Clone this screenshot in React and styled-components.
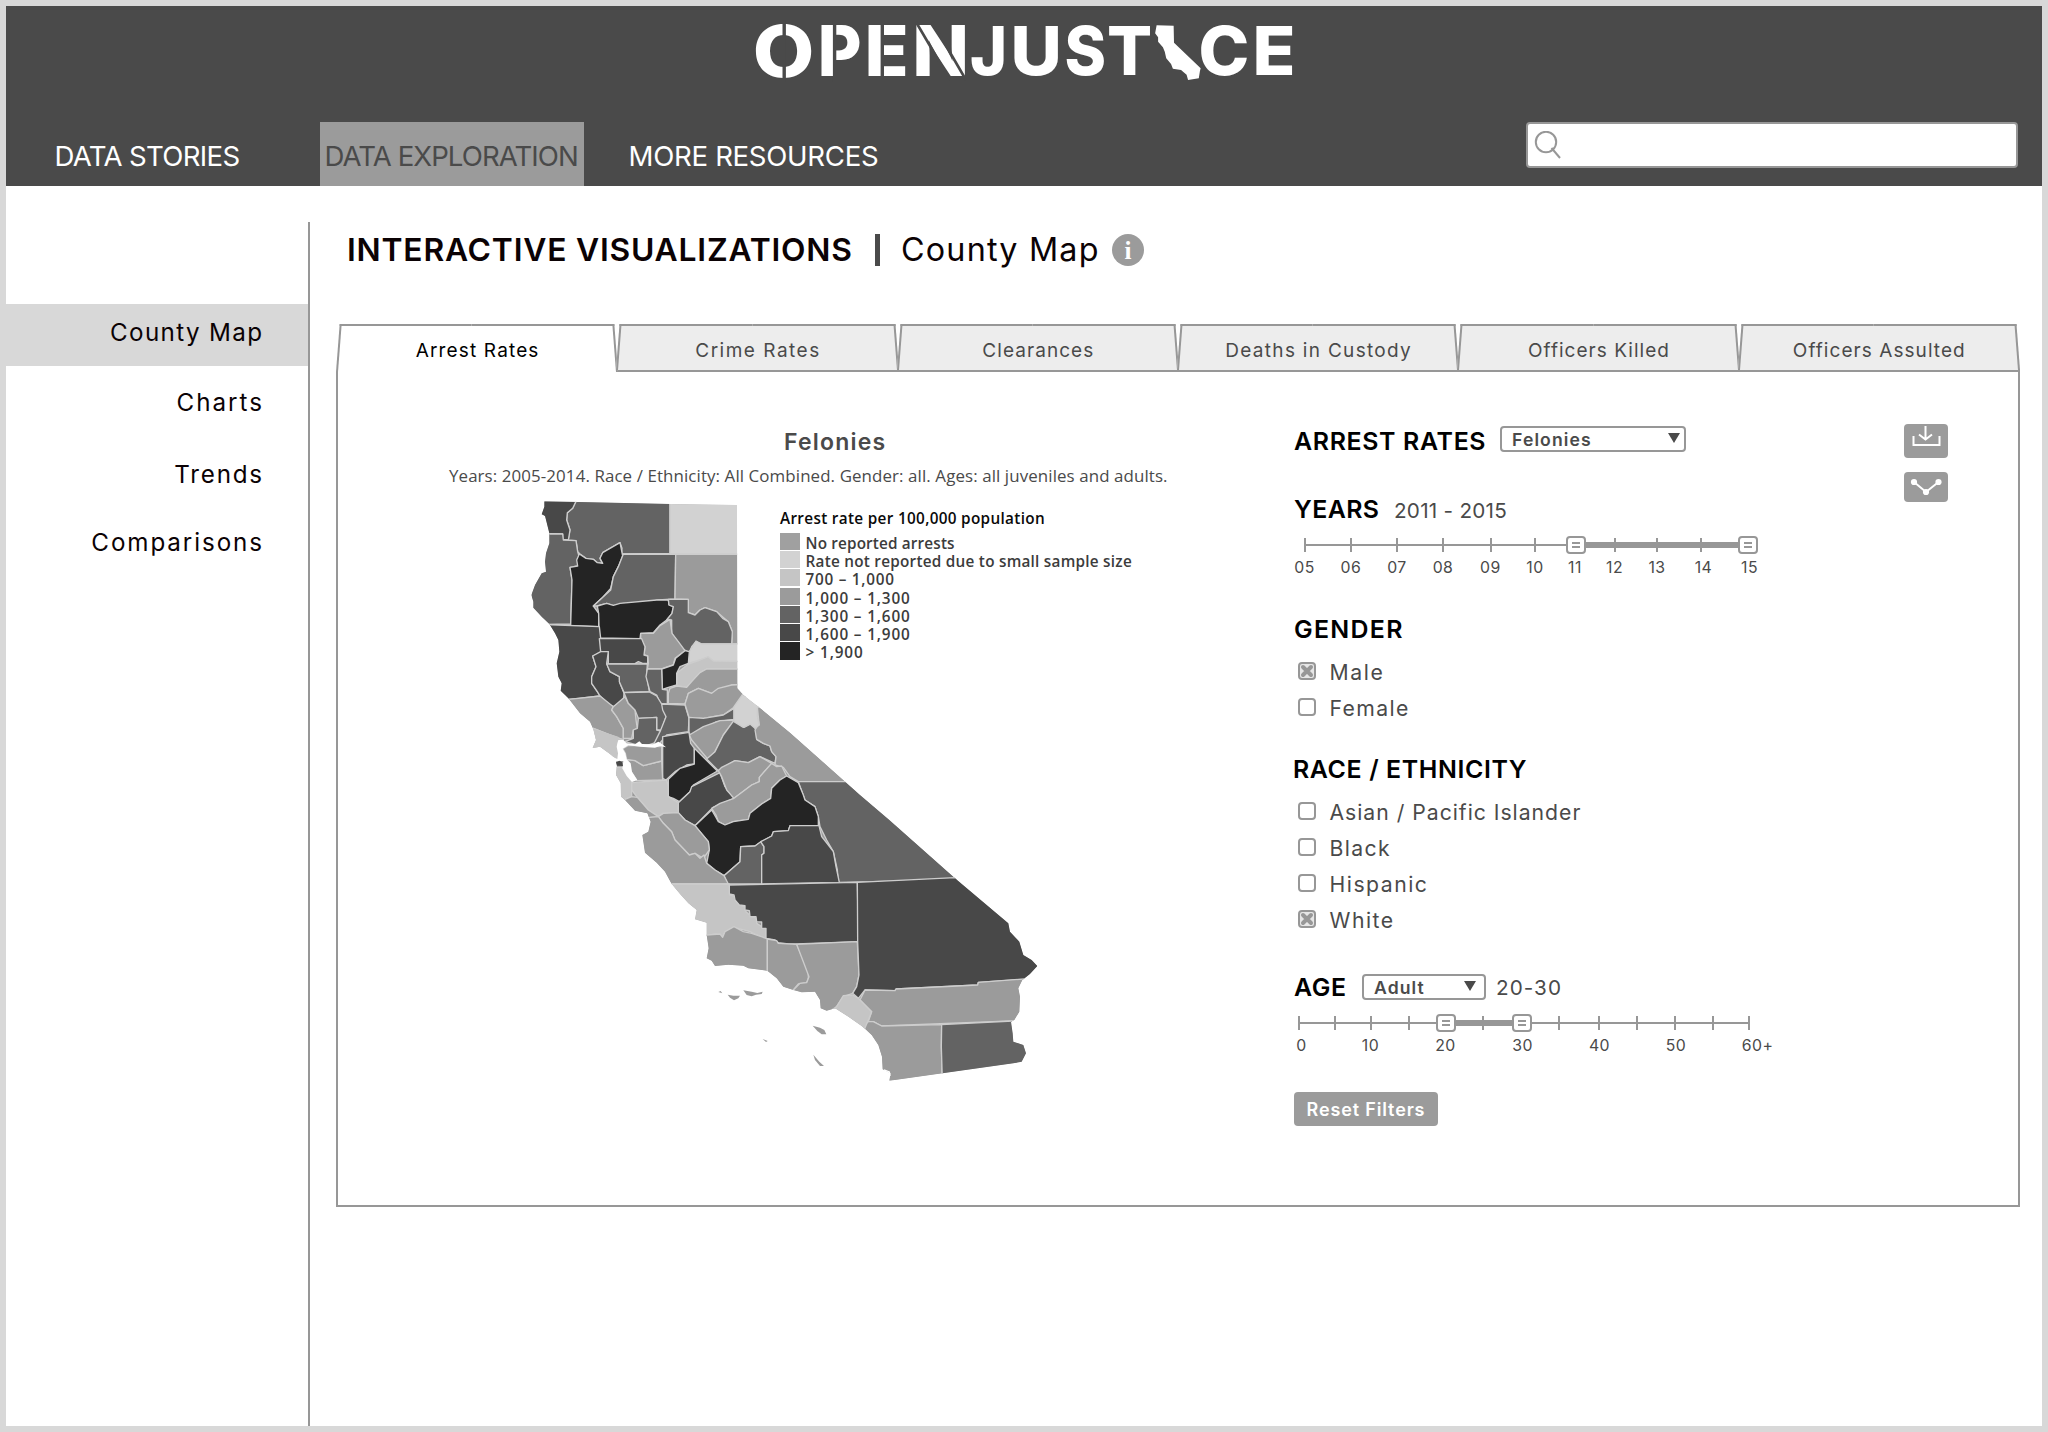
import React from "react";
import styled, { createGlobalStyle, css } from "styled-components";

const ink = "#4a4a4a";
const line = "#979797";
const mute = "#9b9b9b";

const Global = createGlobalStyle`
  *, *::before, *::after { box-sizing: border-box; }
  body { margin: 0; background: #d8d8d8; font-family: Inter, "Liberation Sans", sans-serif; color: ${ink}; }
`;

const Page = styled.div`
  height: 1432px;
  padding: 6px;
  display: flex;
  flex-direction: column;
  background: #d8d8d8;
`;

const Header = styled.header`
  height: 180px;
  flex: none;
  background: ${ink};
  display: flex;
  flex-direction: column;
  justify-content: space-between;
`;

const LogoSvg = styled.svg`
  display: block;
  width: 580px;
  height: 108px;
  margin: -6px 0 0 728px;
  overflow: visible;
  font: 800 100px Inter, sans-serif;
  fill: #fff;
`;

const NavRow = styled.div`
  display: flex;
  align-items: flex-start;
  height: 64px;
`;

const NavLink = styled.a`
  width: ${(p) => p.$width}px;
  height: 64px;
  padding: 3px 0 0 ${(p) => p.$indent}px;
  display: flex;
  align-items: center;
  white-space: nowrap;
  font-size: 27.6px;
  letter-spacing: ${(p) => p.$track}px;
  color: ${(p) => (p.$active ? ink : "#fff")};
  background: ${(p) => (p.$active ? mute : "transparent")};
`;

const SearchBox = styled.label`
  width: 492px;
  height: 46px;
  margin: 0 24px 0 auto;
  padding: 7px 0 0 6px;
  border: 2px solid ${line};
  border-radius: 4px;
  background: #fff;
`;

const Body = styled.div`
  flex: 1;
  display: flex;
  background: #fff;
`;

const Sidebar = styled.nav`
  width: 304px;
  margin-top: 36px;
  padding-top: 82px;
  border-right: 2px solid ${line};
`;

const SideLink = styled.a`
  height: ${(p) => p.$height}px;
  padding: 0 ${(p) => 46 - p.$track}px 5px 0;
  display: flex;
  align-items: center;
  justify-content: flex-end;
  font-size: 24.2px;
  letter-spacing: ${(p) => p.$track}px;
  color: #0b0204;
  background: ${(p) => (p.$active ? "#d8d8d8" : "transparent")};
`;

const Main = styled.main`
  flex: 1;
  padding: 48px 22px 0 26px;
`;

const Heading = styled.div`
  height: 32px;
  margin-left: 11px;
  display: flex;
  align-items: center;
  font-size: 32.3px;
  line-height: 32px;
  color: #0b0204;
  white-space: nowrap;
`;
const HeadingTitle = styled.h1`
  width: 528px;
  margin: 0;
  font: inherit;
  font-size: 31.8px;
  font-weight: 600;
  letter-spacing: 0.8px;
`;
const HeadingBar = styled.span`
  width: 5px;
  height: 32px;
  margin-right: 21px;
  background: ${ink};
`;
const HeadingPage = styled.span`
  width: 211px;
  letter-spacing: 1.2px;
`;
const InfoBadge = styled.span`
  width: 32px;
  height: 32px;
  border-radius: 50%;
  background: ${mute};
  color: #fff;
  font: 700 25px/33px "Liberation Serif", serif;
  text-align: center;
`;

const Tabs = styled.div`
  position: relative;
  z-index: 1;
  display: flex;
  margin: 58px 1px 0 1px;
`;
const slope = css`
  content: "";
  position: absolute;
  z-index: -1;
  top: 0;
  bottom: ${(p) => (p.$active ? -2 : 0)}px;
  width: 51%;
  background: ${(p) => (p.$active ? "#fff" : "#ededed")};
  border-top: 2px solid ${line};
  transform-origin: bottom;
`;
const Tab = styled.button`
  position: relative;
  isolation: isolate;
  flex: 1;
  height: 46px;
  padding: 7px 0 0 1px;
  border: 0;
  background: none;
  font: 400 19px Inter, sans-serif;
  letter-spacing: ${(p) => p.$track}px;
  color: ${(p) => (p.$active ? "#000" : ink)};
  &::before {
    ${slope}
    left: -1px;
    border-left: 2px solid ${line};
    transform: skewX(-4.4deg);
  }
  &::after {
    ${slope}
    right: -1px;
    border-right: 2px solid ${line};
    transform: skewX(4.4deg);
  }
`;

const Panel = styled.section`
  height: 837px;
  border: 2px solid ${line};
  display: flex;
  background: #fff;
`;

const Figure = styled.figure`
  width: 956px;
  margin: 0;
  padding: 55px 0 0 110px;
`;
const FigureTitle = styled.h2`
  margin: 0 0 7px 336px;
  font-size: 23px;
  line-height: 30px;
  font-weight: 600;
  letter-spacing: 1.2px;
`;
const FigureNote = styled.p`
  margin: 0 0 12px 1px;
  font: 400 16.9px/24px "Open Sans", sans-serif;
  letter-spacing: 0.1px;
  white-space: nowrap;
`;
const Stage = styled.div`
  display: grid;
  grid-template-columns: 62px 270px 1fr;
`;
const MapSvg = styled.svg`
  grid-area: 1 / 2 / 2 / 4;
  width: 540px;
  height: 586.67px;
`;
const Legend = styled.div`
  grid-area: 1 / 3 / 2 / 4;
  padding-top: 9px;
  font: 600 15.3px/18px "Open Sans", sans-serif;
  color: #3c3c3c;
  white-space: nowrap;
`;
const LegendTitle = styled.div`
  margin-bottom: 5.7px;
  letter-spacing: 0.32px;
  color: #0a0a0a;
`;
const LegendRow = styled.div`
  height: 18.3px;
  display: flex;
  align-items: flex-start;
  gap: 5.5px;
  letter-spacing: ${(p) => p.$track}px;
  line-height: 21px;
`;
const Swatch = styled.i`
  width: 20px;
  height: 17.2px;
  background: ${(p) => p.$fill};
`;

const Controls = styled.div`
  width: 610px;
  padding-top: 54px;
`;
const Group = styled.div`
  margin-bottom: ${(p) => p.$after}px;
`;
const Row = styled.div`
  height: 26px;
  display: flex;
  align-items: center;
`;
const Label = styled.h3`
  width: ${(p) => p.$width}px;
  margin: 0 0 0 ${(p) => p.$left || 0}px;
  padding-top: ${(p) => p.$drop || 0}px;
  font-size: 24.9px;
  line-height: 26px;
  font-weight: 600;
  letter-spacing: ${(p) => p.$track}px;
  color: #000;
  white-space: nowrap;
`;
const Value = styled.span`
  padding-top: ${(p) => p.$drop || 0}px;
  margin-left: ${(p) => p.$left || 0}px;
  font-size: 20.7px;
  letter-spacing: ${(p) => p.$track}px;
`;
const Select = styled.button`
  width: ${(p) => p.$width}px;
  height: 26px;
  padding: 1px ${(p) => p.$right}px 0 10px;
  border: 2px solid ${line};
  border-radius: 4px;
  background: #fff;
  display: flex;
  align-items: center;
  justify-content: space-between;
  font: 600 17.6px Inter, sans-serif;
  letter-spacing: 1.1px;
  color: ${ink};
`;
const Caret = styled.i`
  border: 6px solid transparent;
  border-top: 10px solid ${ink};
  border-bottom: 0;
  margin-bottom: 3px;
`;

const Slider = styled.div`
  position: relative;
  height: 18px;
  margin: 14px 0 0 ${(p) => p.$left}px;
`;
const Rail = styled.div`
  position: absolute;
  top: 8px;
  height: 2px;
  width: ${(p) => p.$width}px;
  background: ${line};
`;
const RangeBar = styled.div`
  position: absolute;
  top: 6px;
  height: 6px;
  background: ${line};
`;
const Tick = styled.i`
  position: absolute;
  top: 2px;
  width: 2px;
  height: 14px;
  background: ${line};
`;
const Handle = styled.span`
  position: absolute;
  top: 0;
  width: 20px;
  height: 18px;
  padding: 4px 4px;
  border: 2px solid ${line};
  border-radius: 4px;
  background: #fff;
  &::before {
    content: "";
    display: block;
    height: 6px;
    border: solid ${line};
    border-width: 2px 0;
  }
`;
const Scale = styled.div`
  position: relative;
  height: 28px;
`;
const ScaleLabel = styled.span`
  position: absolute;
  top: 4px;
  transform: translateX(-50%);
  font-size: 15.8px;
  line-height: 19px;
  letter-spacing: 0.5px;
`;

const Options = styled.div`
  padding-top: 11px;
`;
const Option = styled.label`
  height: 36px;
  padding-left: 4px;
  display: flex;
  align-items: center;
  font-size: 21.2px;
  letter-spacing: ${(p) => p.$track}px;
`;
const OptionText = styled.span`
  margin-left: 13.5px;
  padding-top: 2px;
`;
const Box = styled.span`
  width: 18px;
  height: 18px;
  border: 2px solid ${line};
  border-radius: 4px;
  background: ${(p) => (p.$on ? "#e6e6e6" : "#fff")};
  display: grid;
  place-items: center;
`;

const Reset = styled.button`
  width: 144px;
  height: 34px;
  padding: 0;
  border: 0;
  border-radius: 4px;
  background: ${mute};
  color: #fff;
  font: 600 18px Inter, sans-serif;
  letter-spacing: 0.85px;
  white-space: nowrap;
`;

const Actions = styled.div`
  padding-top: 52px;
  display: flex;
  flex-direction: column;
  gap: 14px;
`;
const Action = styled.button`
  width: 44px;
  height: ${(p) => p.$height}px;
  padding: 0;
  border: 0;
  border-radius: 4px;
  background: ${mute};
  svg { display: block; }
`;

/* glyph, target left, target right, bearing left, bearing right, baseline, height scale */
const glyphs = [
  ["O", 755.5, 812.5, 3.5, 75, 76.6, 0.72],
  ["P", 821, 860, 5, 63, 76, 0.702],
  ["E", 868, 906, 5, 57.5, 76, 0.702],
  ["N", 916, 965, 5, 71, 76, 0.702],
  ["J", 971, 1004, 1.5, 54, 75, 0.675],
  ["U", 1014, 1058.5, 5, 68, 75, 0.675],
  ["S", 1066.5, 1104, 3, 62.5, 75, 0.675],
  ["T", 1109, 1150, 3, 64.5, 75, 0.675],
  ["C", 1201, 1247.5, 3.5, 71.5, 75, 0.675],
  ["E", 1256, 1293, 5, 57.5, 75, 0.675],
];

const Logo = () => (
  <LogoSvg viewBox="734 0 580 108" role="img" aria-label="OpenJustice">
    {glyphs.map(([ch, x0, x1, l, r, base, sy], i) => {
      const sx = (x1 - x0) / (r - l);
      return (
        <text key={i} transform={`translate(${x0 - l * sx} ${base}) scale(${sx} ${sy})`}>
          {ch}
        </text>
      );
    })}
    <g stroke={ink} strokeWidth="3.4" fill="none">
      <path d="M784.2 20V82M834.6 20V82M882.3 20V82" />
      <path strokeWidth="2.6" d="M916 22L950 80M932.4 22L966 80" />
    </g>
    <path
      transform="translate(740 0) scale(.37 .3333)"
      d="M1126 76L1172 77L1173 128L1245 205L1243 214L1240 235L1211 240L1207 224L1192 210L1170 206L1165 192L1152 175L1148 155L1143 142L1130 125L1130 112L1122 100Z"
    />
  </LogoSvg>
);

const shades = { D: "#d2d2d2", L: "#c5c5c5", G: "#9b9b9b", M: "#636363", K: "#484848", B: "#242424" };

const outline =
  "103,64 480,72 681,75 682,625 700,645 745,680 840,758 1050,945 1138,1020 1335,1195 1495,1330 1500,1355 1528,1385 1540,1425 1565,1440 1582,1458 1560,1482 1537,1500 1525,1525 1530,1550 1528,1595 1513,1620 1503,1625 1508,1660 1510,1685 1540,1695 1548,1720 1535,1745 1510,1750 1138,1802 1142,1780 1118,1768 1116,1730 1105,1695 1085,1665 1060,1642 1015,1610 975,1585 950,1592 932,1585 930,1560 915,1535 875,1537 850,1530 820,1520 800,1495 772,1472 715,1465 700,1457 655,1454 615,1458 605,1442 590,1435 596,1405 590,1365 590,1328 555,1318 560,1290 535,1270 510,1242 485,1212 465,1175 440,1148 405,1118 397,1065 415,1055 422,1025 412,1000 375,992 345,960 333,950 332,910 318,885 320,860 318,837 300,822 270,800 248,804 258,780 250,748 240,725 210,700 175,655 152,632 155,610 145,590 140,550 148,515 145,480 135,460 118,432 95,410 70,383 70,365 64,345 75,315 95,280 108,275 105,245 108,220 118,190 118,160 105,108 95,103 103,80";

const north = [
  ["M", "197,66 197,40 480,40 480,220 335,222 336,205 330,188 300,205 278,218 270,235 278,250 262,248 250,238 228,235 210,222 203,215 198,182 160,180 175,178 180,150 170,120 172,98 188,85"],
  ["K", "80,40 197,40 197,66 188,85 172,98 170,120 180,150 175,180 158,178 158,162 80,160"],
  ["D", "480,40 720,40 720,222 480,222"],
  ["M", "20,162 158,162 160,180 198,182 203,215 208,232 203,258 180,262 186,300 182,432 20,435"],
  ["B", "208,222 228,235 250,238 262,248 278,250 270,235 278,218 300,205 330,188 338,228 325,260 310,290 302,325 275,355 250,378 266,400 266,440 182,437 186,300 180,262 203,258 200,240"],
  ["M", "340,222 497,223 495,357 445,360 420,365 385,368 340,370 310,377 290,370 262,378 250,378 302,330 310,290 325,260"],
  ["G", "497,223 720,223 720,492 665,492 667,455 655,425 620,395 585,383 570,390 555,405 535,398 535,358 495,357"],
  ["B", "262,378 290,370 310,376 330,370 440,360 475,360 477,375 490,380 486,400 470,420 450,435 430,458 392,460 390,476 268,474 266,400"],
  ["M", "475,358 535,358 535,398 555,405 570,390 585,383 620,395 638,415 655,425 667,455 665,492 575,492 558,485 545,500 538,518 520,508 485,460 485,420 470,420 486,400 490,380 477,375"],
  ["G", "392,460 430,460 450,437 480,418 486,460 505,485 525,512 495,535 490,555 455,567 412,567 415,550 413,528 402,525 405,500 392,478"],
  ["D", "558,483 575,492 720,492 720,545 610,543 595,530 570,540 535,550 538,515"],
  ["L", "535,552 570,540 595,530 610,543 720,545 720,567 590,567 570,578 545,605 530,622 500,618 500,580"],
  ["B", "538,515 535,550 510,560 500,580 500,615 475,622 457,628 455,567 490,555 497,535 525,512"],
  ["G", "500,618 530,622 545,605 570,578 590,567 720,567 720,612 665,615 605,640 565,625 535,640 525,672 475,670 475,640 480,625"],
  ["K", "60,432 268,440 272,475 275,515 248,528 258,560 245,590 245,610 262,635 270,648 205,655 175,658 60,660"],
  ["K", "268,476 395,476 405,500 402,525 413,528 413,550 398,550 385,545 375,551 295,552 295,515 272,515"],
  ["K", "248,528 272,515 295,515 290,550 300,575 328,590 330,610 342,640 340,665 310,680 295,672 270,648 262,635 245,610 245,590 258,560"],
  ["M", "290,552 412,552 410,585 418,635 342,637 328,605 328,590 300,575"],
  ["M", "412,567 455,567 457,628 472,630 472,672 450,670 440,645 420,635 408,590"],
  ["G", "60,660 175,658 205,655 270,648 310,680 305,690 320,710 340,745 340,780 300,765 250,745 60,745"],
  ["L", "200,745 250,745 300,765 340,780 325,800 325,850 200,850"],
  ["G", "310,680 345,650 355,670 375,690 378,720 382,745 370,750 365,775 340,775 340,745 320,710 305,690"],
  ["M", "342,638 418,636 440,648 460,680 468,710 455,750 440,750 440,712 385,715 375,690 355,670"],
  ["M", "385,715 440,712 440,750 460,755 445,785 400,800 345,785 370,775 370,750 382,745"],
  ["M", "455,672 525,675 537,715 535,755 500,760 470,765 445,795 430,795 450,755 468,710 458,690"],
  ["G", "525,672 535,640 565,625 605,640 625,625 665,615 720,612 720,640 675,680 640,705 580,715 537,712"],
  ["M", "537,712 580,715 640,705 672,685 672,718 620,725 545,767 537,760"],
];

const middle = [
  ["G", "388,165 430,140 480,122 524,120 490,165 465,215 443,237 395,180"],
  ["M", "524,118 552,142 575,130 588,148 590,178 610,190 630,198 635,215 648,230 645,250 600,230 565,248 525,242 485,265 475,272 440,237 465,215 490,165"],
  ["G", "590,60 960,305 715,305 690,290 670,262 645,255 648,230 635,215 630,198 610,190 590,178 585,150 597,130"],
  ["D", "522,80 550,40 620,60 592,84 592,110 598,135 585,145 570,132 550,142 522,125"],
  ["K", "308,170 387,157 392,190 403,205 403,252 380,255 345,275 318,300 308,295"],
  ["G", "120,190 305,196 305,243 250,257 225,240 200,238"],
  ["G", "190,238 225,242 250,257 305,243 308,300 230,302"],
  ["B", "403,205 472,273 400,315 390,335 358,365 340,355 325,350 325,298 360,265 403,252"],
  ["K", "480,278 495,320 522,355 458,383 405,437 375,420 355,398 355,368 390,335 395,320"],
  ["G", "475,272 485,262 525,242 565,248 600,230 635,250 598,292 598,305 575,315 522,355 500,330 485,290"],
  ["G", "635,250 650,260 665,258 680,288 660,300 635,325 632,355 605,372 570,400 565,418 520,425 495,435 475,425 468,405 455,385 480,370 522,355 575,315 598,305 598,292"],
  ["M", "715,305 960,305 1250,598 835,607 832,570 820,515 800,480 780,440 775,410 765,380 735,360 722,325"],
  ["B", "680,288 715,308 730,345 735,360 765,380 775,410 775,437 690,437 685,452 640,455 635,468 605,485 585,498 542,500 540,545 492,587 465,570 440,550 448,510 445,485 405,437 455,390 468,412 475,425 495,435 520,425 565,418 570,400 605,372 632,355 635,325 660,300"],
  ["M", "542,500 585,498 602,485 612,500 612,520 605,525 605,612 502,612 492,587 540,545"],
  ["K", "602,485 635,468 640,455 685,452 690,437 777,437 785,470 805,495 820,515 828,560 838,607 605,612 605,525 612,520 612,500"],
  ["L", "215,308 320,300 325,320 325,350 355,368 355,400 310,400 295,410 265,390 230,350 215,330"],
  ["L", "120,262 186,262 215,305 215,335 215,350 195,358 120,380"],
  ["G", "120,380 195,358 215,350 232,352 265,390 295,410 270,412 240,430"],
  ["G", "295,410 310,400 355,398 375,420 405,437 445,485 448,510 430,535 405,520 388,525 345,480 335,455 310,430"],
  ["G", "270,412 295,410 310,430 335,455 345,480 388,525 405,520 420,535 432,525 440,550 465,570 492,587 505,612 200,612 200,450"],
  ["L", "200,612 508,612 510,645 525,650 540,675 555,680 558,695 575,710 590,715 590,730 605,740 618,745 618,775 590,765 570,755 522,742 505,750 492,760 488,773 470,762 430,768 380,768"],
];

const south = [
  ["K", "148,195 532,187 535,365 350,372 325,372 295,368 285,360 258,355 258,325 245,325 245,306 230,305 228,290 210,290 208,272 195,270 195,257 178,255 165,240 162,225 148,222"],
  ["G", "20,345 80,345 120,342 128,352 135,335 162,320 190,335 215,340 258,355 262,357 262,520 20,520"],
  ["G", "262,357 290,362 295,370 350,373 385,455 385,475 380,488 355,492 340,510 320,540 262,530"],
  ["G", "350,373 532,365 537,465 530,500 518,520 490,530 468,562 440,620 320,600 320,530 360,490 380,488 387,470"],
  ["K", "532,187 825,173 1100,200 1100,475 1027,478 895,487 893,495 648,507 645,512 555,510 535,535 518,520 530,500 537,465 533,365"],
  ["G", "555,510 645,512 648,507 893,495 895,487 1060,475 1060,600 605,618 580,605 565,605 575,575 540,540"],
  ["G", "565,605 580,605 605,618 785,614 784,680 787,780 500,850 540,625"],
  ["M", "785,614 1060,600 1060,800 787,780 784,680"],
  ["L", "490,527 518,525 535,535 575,575 565,600 550,635 455,570 470,560"],
];

const islands = [
  "115,516 122,513 127,520",
  "143,524 160,527 180,527 175,535 162,541 150,533",
  "190,511 215,515 232,519 248,515 245,522 228,524 215,529 200,525",
  "398,617 420,623 433,630 439,643 425,643 412,633",
  "248,657 263,663 258,666",
  "400,704 418,725 432,738 420,738 405,720",
];

const bay =
  "172,190 175,180 190,180 200,190 225,193 238,184 246,192 280,193 295,185 303,190 318,202 300,198 285,203 240,200 205,196 188,206 196,220 200,238 212,250 216,275 232,300 216,306 200,288 187,265 190,243 168,243 150,236 160,232 172,237 174,220 170,200";

const Counties = ({ list }) =>
  list.map(([shade, points], i) => <polygon key={i} points={points} fill={shades[shade]} />);

const CountyMap = () => (
  <MapSvg viewBox="0 60 1620 1760" role="img" aria-label="Arrest rates by county">
    <clipPath id="state">
      <polygon points={outline} />
    </clipPath>
    <g clipPath="url(#state)" stroke="#cdcdcd" strokeWidth="4" strokeLinejoin="round">
      <polygon points={outline} fill={shades.G} stroke="none" />
      <Counties list={north} />
      <g transform="translate(150 600)">
        <polygon points="80,140 175,170 175,240 80,240" fill={shades.L} stroke="none" />
        <Counties list={middle.filter(([, p]) => !p.startsWith("120,190"))} />
        <polygon points="188,206 205,196 305,200 305,243 250,257 225,242 200,238 196,220" fill={shades.G} />
      </g>
      <g transform="translate(510 1020)">
        <Counties list={south} />
      </g>
    </g>
    <g transform="translate(150 600)">
      <polygon points={bay} fill="#fff" />
      <polygon points="168,247 178,242 186,246 189,258 171,257" fill={shades.K} />
    </g>
    <g transform="translate(510 1020)" fill={shades.G}>
      {islands.map((points) => (
        <polygon key={points} points={points} />
      ))}
      <path d="M612 750L628 756L630 768" fill="none" stroke="#fff" strokeWidth="4" />
    </g>
  </MapSvg>
);

const legendRows = [
  ["#a0a0a0", "No reported arrests", 0.15],
  ["#d2d2d2", "Rate not reported due to small sample size", 0.25],
  ["#c5c5c5", "700 – 1,000", 0.75],
  ["#9b9b9b", "1,000 – 1,300", 0.87],
  ["#636363", "1,300 – 1,600", 0.87],
  ["#484848", "1,600 – 1,900", 0.87],
  ["#242424", "> 1,900", 0.9],
];

const tabs = [
  ["Arrest Rates", 1.15],
  ["Crime Rates", 1.5],
  ["Clearances", 1.05],
  ["Deaths in Custody", 1.3],
  ["Officers Killed", 1.03],
  ["Officers Assulted", 1.06],
];

const years = [
  ["05", 0, 0], ["06", 46, 46.5], ["07", 92, 92.5], ["08", 138, 138.5], ["09", 186, 186], ["10", 230, 230.5],
  ["11", 270, 270.5], ["12", 310, 310], ["13", 352, 352.5], ["14", 396, 399], ["15", 442, 445],
];
const yearTicks = years.map(([, at]) => at);
const yearLabels = years.map(([label, , at]) => [label, at]);

const ageTicks = [0, 36, 72, 110, 147, 184, 223, 260, 300, 338, 376, 414, 450];
const ageLabels = [["0", 3], ["10", 72], ["20", 147], ["30", 224], ["40", 301], ["50", 377.5], ["60+", 459]];

const RangeSlider = ({ left, width, ticks, from, to, labels }) => (
  <>
    <Slider $left={left}>
      <Rail $width={width} />
      <RangeBar style={{ left: from, width: to - from }} />
      {ticks.map((t) => (
        <Tick key={t} style={{ left: t }} />
      ))}
      <Handle style={{ left: from - 10 }} />
      <Handle style={{ left: to - 10 }} />
    </Slider>
    <Scale>
      {labels.map(([text, at]) => (
        <ScaleLabel key={text} style={{ left: at + left + 0.5 }}>
          {text}
        </ScaleLabel>
      ))}
    </Scale>
  </>
);

const Check = ({ on, track, children }) => (
  <Option $track={track}>
    <Box $on={on}>
      {on && (
        <svg width="14" height="14" viewBox="0 0 14 14" stroke={line} strokeWidth="4" strokeLinecap="round">
          <path d="M3 3L11 11M11 3L3 11" />
        </svg>
      )}
    </Box>
    <OptionText>{children}</OptionText>
  </Option>
);

export default function App() {
  return (
    <Page>
      <Global />
      <Header>
        <Logo />
        <NavRow>
          <NavLink $width={314} $indent={48.5} $track={-0.68}>DATA STORIES</NavLink>
          <NavLink $width={264} $indent={4.5} $track={-0.95} $active>DATA EXPLORATION</NavLink>
          <NavLink $width={300} $indent={44.5} $track={-0.3}>MORE RESOURCES</NavLink>
          <SearchBox>
            <svg width="30" height="30" viewBox="0 0 30 30" fill="none" stroke={line} strokeWidth="2">
              <circle cx="12" cy="11" r="10.2" />
              <path d="M17.5 17L26 27" />
            </svg>
          </SearchBox>
        </NavRow>
      </Header>
      <Body>
        <Sidebar>
          <SideLink $height={62} $track={1.35} $active>County Map</SideLink>
          <SideLink $height={77} $track={2}>Charts</SideLink>
          <SideLink $height={68} $track={1.75}>Trends</SideLink>
          <SideLink $height={68} $track={1.9}>Comparisons</SideLink>
        </Sidebar>
        <Main>
          <Heading>
            <HeadingTitle>INTERACTIVE VISUALIZATIONS</HeadingTitle>
            <HeadingBar />
            <HeadingPage>County Map</HeadingPage>
            <InfoBadge>i</InfoBadge>
          </Heading>
          <Tabs>
            {tabs.map(([text, track], i) => (
              <Tab key={text} $track={track} $active={i === 0}>{text}</Tab>
            ))}
          </Tabs>
          <Panel>
            <Figure>
              <FigureTitle>Felonies</FigureTitle>
              <FigureNote>
                Years: 2005-2014. Race / Ethnicity: All Combined. Gender: all. Ages: all juveniles and adults.
              </FigureNote>
              <Stage>
                <CountyMap />
                <Legend>
                  <LegendTitle>Arrest rate per 100,000 population</LegendTitle>
                  {legendRows.map(([fill, text, track]) => (
                    <LegendRow key={text} $track={track}>
                      <Swatch $fill={fill} />
                      {text}
                    </LegendRow>
                  ))}
                </Legend>
              </Stage>
            </Figure>
            <Controls>
              <Group $after={44}>
                <Row>
                  <Label $width={206} $track={0.65} $drop={3}>ARREST RATES</Label>
                  <Select $width={186} $right={4}>Felonies<Caret /></Select>
                </Row>
              </Group>
              <Group $after={34}>
                <Row>
                  <Label $width={100} $track={0.4}>YEARS</Label>
                  <Value $drop={2} $track={0.25}>2011 - 2015</Value>
                </Row>
                <RangeSlider left={10} width={444} ticks={yearTicks} from={272} to={444} labels={yearLabels} />
              </Group>
              <Group $after={31}>
                <Row><Label $track={1.3}>GENDER</Label></Row>
                <Options>
                  <Check on track={1.6}>Male</Check>
                  <Check track={1.4}>Female</Check>
                </Options>
              </Group>
              <Group $after={37}>
                <Row><Label $left={-1} $track={0.62}>RACE / ETHNICITY</Label></Row>
                <Options>
                  <Check track={0.98}>Asian / Pacific Islander</Check>
                  <Check track={1.4}>Black</Check>
                  <Check track={1.5}>Hispanic</Check>
                  <Check on track={1.5}>White</Check>
                </Options>
              </Group>
              <Group $after={32}>
                <Row>
                  <Label $width={68} $track={0.6}>AGE</Label>
                  <Select $width={124} $right={8}>Adult<Caret /></Select>
                  <Value $left={10} $track={1.05}>20-30</Value>
                </Row>
                <RangeSlider left={4} width={452} ticks={ageTicks} from={148} to={224} labels={ageLabels} />
              </Group>
              <Reset>Reset Filters</Reset>
            </Controls>
            <Actions>
              <Action $height={34}>
                <svg width="44" height="34" fill="none" stroke="#fff" strokeWidth="2">
                  <path d="M9.5 12V21H35.5V12M21.5 2V15M15 10.5L21.5 15.5L28 10.5" />
                </svg>
              </Action>
              <Action $height={30}>
                <svg width="44" height="30" stroke="#fff" strokeWidth="2" fill="none">
                  <path d="M10 10L22 20L34.5 10" />
                  <g fill="#fff" stroke="none">
                    <circle cx="10" cy="10" r="3.1" />
                    <circle cx="22" cy="20" r="3.1" />
                    <circle cx="34.5" cy="10" r="3.1" />
                  </g>
                </svg>
              </Action>
            </Actions>
          </Panel>
        </Main>
      </Body>
    </Page>
  );
}
